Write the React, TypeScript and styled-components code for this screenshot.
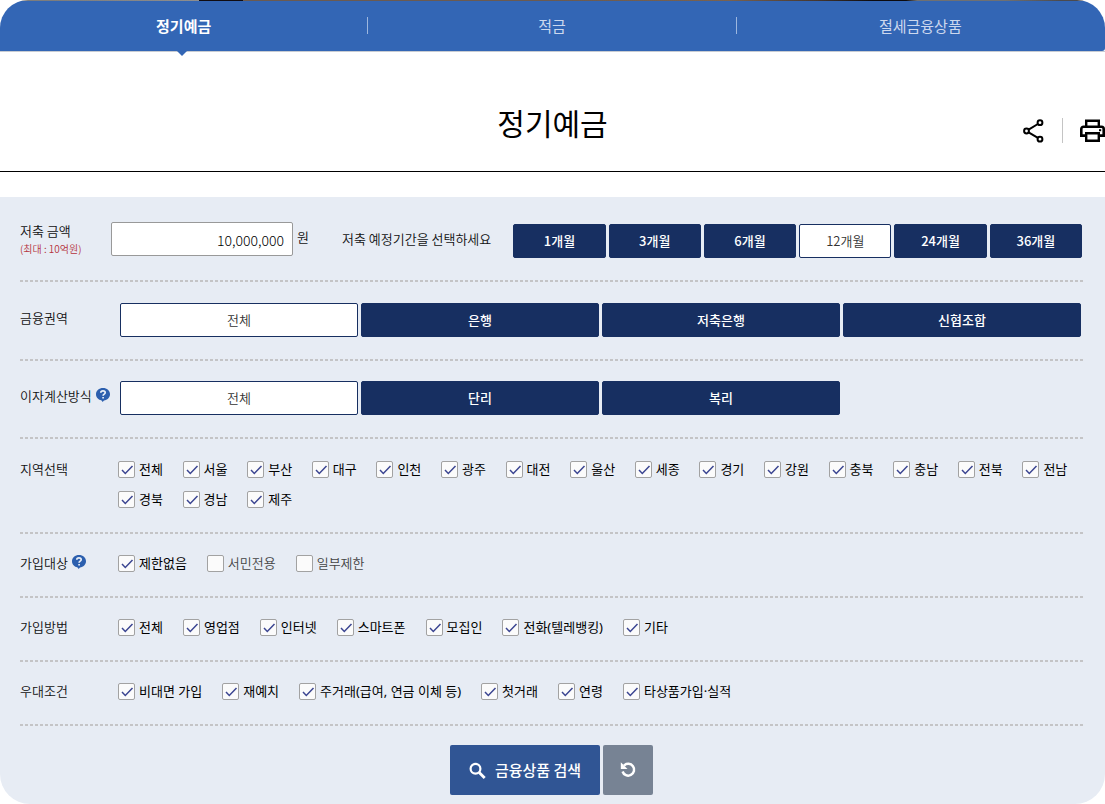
import React, { useState } from "react";
import styled, { createGlobalStyle, css } from "styled-components";

const GlobalStyle = createGlobalStyle`
  * { box-sizing: border-box; }
  body {
    margin: 0;
    background: #fff;
    color: #111;
    font-family: "Noto Sans CJK KR", "Noto Sans", sans-serif;
    font-size: 13px;
    line-height: 18px;
  }
  button, input { font-family: inherit; }
`;

const TabBar = styled.nav`
  display: flex;
  height: 51px;
  border-radius: 28px 28px 3px 0;
  background:
    linear-gradient(90deg, #7d7d7d 0 5%, #8e8e8e 18%, #100c12 18% 22%, #6b5a50 22% 50%, #7a624f 66%, #44362f 74%, #0c0a0e 79% 82%, #6f7072 83% 91%, #4b4a4e 96%)
      0 0 / 100% 1px no-repeat,
    #3366b5;
`;

const Tab = styled.a<{ $active?: boolean }>`
  position: relative;
  flex: 1;
  display: flex;
  align-items: center;
  justify-content: center;
  padding: 1px 1px 0 0;
  font-size: 15px;
  font-weight: ${(p) => (p.$active ? 700 : 400)};
  color: ${(p) => (p.$active ? "#fff" : "#ccd8ee")};
  text-decoration: none;

  &:not(:first-child)::before {
    content: "";
    position: absolute;
    left: -1px;
    top: 17px;
    width: 1px;
    height: 17px;
    background: #9db7df;
  }

  ${(p) =>
    p.$active &&
    css`
      &::after {
        content: "";
        position: absolute;
        left: calc(50% - 8px);
        top: 50px;
        border: 6px solid transparent;
        border-top-color: #3366b5;
        border-bottom: 0;
      }
    `}
`;

const TitleBar = styled.header`
  display: grid;
  grid-template-columns: 1fr auto 1fr;
  align-items: center;
  padding: 43px 0 21px;
  border-top: 1px solid #c8ccd2;
  border-bottom: 1px solid #000;
`;

const Title = styled.h1`
  grid-column: 2;
  margin: 0;
  font-size: 30px;
  font-weight: 400;
  line-height: 55px;
  color: #000;
`;

const Tools = styled.div`
  display: flex;
  align-items: center;
  justify-content: flex-end;
  padding-top: 16px;
`;

const ToolButton = styled.button`
  display: flex;
  padding: 0;
  border: 0;
  background: none;
  cursor: pointer;
`;

const ToolDivider = styled.span`
  width: 1px;
  height: 25px;
  margin: 0 17px 0 18px;
  background: #c4c4c4;
`;

const Panel = styled.form`
  margin-top: 25px;
  padding: 0 22px 9px 20px;
  border-radius: 0 0 30px 30px;
  background: #e7ecf4;
`;

const Row = styled.div<{ $top: number; $bottom: number }>`
  display: flex;
  align-items: flex-start;
  padding: ${(p) => p.$top}px 0 ${(p) => p.$bottom + 2}px;
  background: repeating-linear-gradient(90deg, #c4c4c6 0 3px, transparent 3px 5px)
    0 100% / 100% 2px no-repeat;
`;

const RowLabel = styled.div<{ $width: number; $top?: number; $line?: number }>`
  flex: none;
  display: flex;
  flex-wrap: wrap;
  gap: 0 4px;
  width: ${(p) => p.$width}px;
  padding-top: ${(p) => p.$top ?? 0}px;
  font-weight: 350;
  line-height: ${(p) => p.$line ?? 16}px;
`;

const Limit = styled.small`
  font-size: 10px;
  color: #b5333c;
`;

const HelpButton = styled.button`
  display: flex;
  height: 14px;
  padding: 0;
  border: 0;
  background: none;
  cursor: pointer;
`;

const AmountInput = styled.input`
  width: 182px;
  height: 34px;
  padding: 2px 8px 0;
  border: 1px solid #999;
  border-radius: 2px;
  background: #fff;
  font-size: 14px;
  font-weight: 300;
  text-align: right;
  color: #000;
`;

const Unit = styled.span`
  padding: 6px 0 0 4px;
  font-weight: 350;
`;

const PeriodHint = styled.span`
  padding: 8px 22px 0 33px;
  font-weight: 350;
  white-space: nowrap;
`;

const Choices = styled.div<{ $columns: number; $top: number; $end: number }>`
  flex: 1;
  display: grid;
  grid-template-columns: repeat(${(p) => p.$columns}, 1fr);
  gap: 3px;
  padding: ${(p) => p.$top}px ${(p) => p.$end}px 0 0;
`;

const Choice = styled.button<{ $selected: boolean }>`
  height: 34px;
  padding: 0 0 2px;
  border: 1px solid #172f61;
  border-radius: 2px;
  background: ${(p) => (p.$selected ? "#fff" : "#172f61")};
  color: ${(p) => (p.$selected ? "#333" : "#fff")};
  font-size: 13px;
  font-weight: ${(p) => (p.$selected ? 350 : 500)};
  cursor: pointer;
`;

const Checks = styled.div<{ $columns?: number }>`
  font-family: "Noto Sans", "Noto Sans CJK KR", sans-serif;
  ${(p) =>
    p.$columns
      ? css`
          flex: 1;
          display: grid;
          grid-template-columns: repeat(${p.$columns}, 1fr);
          gap: 13px 0;
          margin-right: -4px;
        `
      : css`
          display: flex;
          flex-wrap: wrap;
          gap: 13px 20px;
        `}
`;

const CheckLabel = styled.label`
  position: relative;
  display: flex;
  align-items: center;
  gap: 4px;
  height: 17px;
  white-space: nowrap;
  cursor: pointer;
`;

const CheckText = styled.span`
  padding-bottom: 2px;
`;

const CheckInput = styled.input`
  appearance: none;
  flex: none;
  width: 17px;
  height: 17px;
  margin: 0;
  border: 1px solid #a2a2a2;
  border-radius: 2px;
  background: #fbfbfb;

  & ~ svg { visibility: hidden; }
  &:checked ~ svg { visibility: visible; }
  & ~ span { font-weight: 350; color: #444; }
  &:checked ~ span { font-weight: 400; color: #000; }
`;

const CheckMark = styled.svg`
  position: absolute;
  left: 0;
  top: 0;
  pointer-events: none;
`;

const Actions = styled.div`
  display: flex;
  justify-content: center;
  gap: 3px;
  padding-top: 19px;
`;

const ActionButton = styled.button<{ $wide?: boolean }>`
  display: flex;
  align-items: center;
  justify-content: center;
  gap: 9px;
  width: ${(p) => (p.$wide ? 150 : 50)}px;
  height: 50px;
  padding: 0;
  border: 0;
  border-radius: 2px;
  background: ${(p) => (p.$wide ? "#305594" : "#778394")};
  color: #fff;
  font-size: 15px;
  font-weight: 500;
  cursor: pointer;
`;

const ActionText = styled.span`
  padding-bottom: 2px;
`;

const ShareIcon = () => (
  <svg width="21" height="24" viewBox="0 0 21 24" fill="none" stroke="#000" strokeWidth="2" aria-hidden="true">
    <circle cx="3.5" cy="12" r="2.4" />
    <circle cx="17" cy="3.7" r="2.4" />
    <circle cx="17" cy="20.2" r="2.4" />
    <path d="M5.6 10.7 14.9 5M5.6 13.3l9.3 5.6" />
  </svg>
);

const PrinterIcon = () => (
  <svg width="25" height="24" viewBox="0 0 25 24" fill="none" stroke="#000" aria-hidden="true">
    <path d="M6.2 7V1.7h12.600V7" strokeWidth="2.4" />
    <path d="M6 16.600H1.300V10A2.200 2.200 0 0 1 3.500 7.800h18A2.200 2.200 0 0 1 23.700 10v6.600H19" strokeWidth="2.6" />
    <path d="M6.2 14.200h12.600v7.600H6.200z" strokeWidth="2.4" />
    <path d="M19 11.200h2.200" strokeWidth="2" />
  </svg>
);

const HelpIcon = () => (
  <svg width="14" height="14" viewBox="0 0 14 14" aria-hidden="true">
    <path d="M7 0c3.9 0 7 2.7 7 6.3 0 3.3-2.7 5.9-6 6.3L6.6 14l-1-1.6C2.4 11.9 0 9.5 0 6.3 0 2.7 3.1 0 7 0z" fill="#2c5fae" />
    <path d="M4.8 4.8c0-1.2.9-1.9 2.2-1.9s2.2.7 2.2 1.8c0 1.3-2.1 1.5-2.1 3M7.1 8.900v1.7" fill="none" stroke="#e6edf7" strokeWidth="1.7" />
  </svg>
);

const SearchIcon = () => (
  <svg width="17" height="17" viewBox="0 0 17 17" fill="none" stroke="#fff" aria-hidden="true">
    <circle cx="6.5" cy="6.8" r="4.9" strokeWidth="2.2" />
    <path d="m10.2 10.500 5.5 5.5" strokeWidth="2.8" />
  </svg>
);

const ResetIcon = () => (
  <svg width="16" height="16" viewBox="0 0 16 16" fill="none" aria-hidden="true">
    <path d="M4 3.6A5.9 5.9 0 1 1 2.6 9.5" stroke="#fff" strokeWidth="2.5" />
    <path d="M.8.3v6.7h6.7z" fill="#fff" />
  </svg>
);

function Check({ label, checked = true }: { label: string; checked?: boolean }) {
  return (
    <CheckLabel>
      <CheckInput type="checkbox" defaultChecked={checked} />
      <CheckMark width="17" height="17" viewBox="0 0 17 17" fill="none" stroke="#3b4591" strokeWidth="1.5" aria-hidden="true">
        <path d="m4 9 3.3 3.500 7.2-7.500" />
      </CheckMark>
      <CheckText>{label}</CheckText>
    </CheckLabel>
  );
}

function ChoiceGroup({ options, initial, columns, top = 0, end = 2, label }: {
  options: string[];
  initial: string;
  columns: number;
  top?: number;
  end?: number;
  label: string;
}) {
  const [selected, setSelected] = useState(initial);
  return (
    <Choices $columns={columns} $top={top} $end={end} role="group" aria-label={label}>
      {options.map((o) => (
        <Choice key={o} type="button" $selected={o === selected} aria-pressed={o === selected} onClick={() => setSelected(o)}>
          {o}
        </Choice>
      ))}
    </Choices>
  );
}

const regions = ["전체", "서울", "부산", "대구", "인천", "광주", "대전", "울산", "세종", "경기", "강원", "충북", "충남", "전북", "전남", "경북", "경남", "제주"];
const methods = ["전체", "영업점", "인터넷", "스마트폰", "모집인", "전화(텔레뱅킹)", "기타"];
const benefits = ["비대면 가입", "재예치", "주거래(급여, 연금 이체 등)", "첫거래", "연령", "타상품가입·실적"];

export default function App() {
  return (
    <>
      <GlobalStyle />
      <TabBar>
        <Tab href="#deposit" $active aria-current="page">정기예금</Tab>
        <Tab href="#savings">적금</Tab>
        <Tab href="#tax">절세금융상품</Tab>
      </TabBar>
      <TitleBar>
        <Title>정기예금</Title>
        <Tools>
          <ToolButton type="button" aria-label="공유"><ShareIcon /></ToolButton>
          <ToolDivider />
          <ToolButton type="button" aria-label="인쇄"><PrinterIcon /></ToolButton>
        </Tools>
      </TitleBar>
      <Panel onSubmit={(e) => e.preventDefault()}>
        <Row $top={25} $bottom={22}>
          <RowLabel $width={91} $line={18}>
            <label htmlFor="amount">저축 금액</label>
            <Limit>(최대 : 10억원)</Limit>
          </RowLabel>
          <AmountInput id="amount" type="text" defaultValue="10,000,000" />
          <Unit>원</Unit>
          <PeriodHint>저축 예정기간을 선택하세요</PeriodHint>
          <ChoiceGroup label="저축 예정기간" columns={6} top={2} end={1} initial="12개월" options={["1개월", "3개월", "6개월", "12개월", "24개월", "36개월"]} />
        </Row>
        <Row $top={21} $bottom={22}>
          <RowLabel $width={100} $top={7}>금융권역</RowLabel>
          <ChoiceGroup label="금융권역" columns={4} initial="전체" options={["전체", "은행", "저축은행", "신협조합"]} />
        </Row>
        <Row $top={20} $bottom={22}>
          <RowLabel $width={100} $top={7}>
            이자계산방식
            <HelpButton type="button" aria-label="이자계산방식 도움말"><HelpIcon /></HelpButton>
          </RowLabel>
          <ChoiceGroup label="이자계산방식" columns={4} initial="전체" options={["전체", "단리", "복리"]} />
        </Row>
        <Row $top={22} $bottom={24}>
          <RowLabel $width={98}>지역선택</RowLabel>
          <Checks $columns={15}>{regions.map((r) => <Check key={r} label={r} />)}</Checks>
        </Row>
        <Row $top={21} $bottom={24}>
          <RowLabel $width={98}>
            가입대상
            <HelpButton type="button" aria-label="가입대상 도움말"><HelpIcon /></HelpButton>
          </RowLabel>
          <Checks>
            <Check label="제한없음" />
            <Check label="서민전용" checked={false} />
            <Check label="일부제한" checked={false} />
          </Checks>
        </Row>
        <Row $top={21} $bottom={24}>
          <RowLabel $width={98}>가입방법</RowLabel>
          <Checks>{methods.map((m) => <Check key={m} label={m} />)}</Checks>
        </Row>
        <Row $top={21} $bottom={24}>
          <RowLabel $width={98}>우대조건</RowLabel>
          <Checks>{benefits.map((b) => <Check key={b} label={b} />)}</Checks>
        </Row>
        <Actions>
          <ActionButton type="submit" $wide><SearchIcon /><ActionText>금융상품 검색</ActionText></ActionButton>
          <ActionButton type="reset" aria-label="초기화"><ResetIcon /></ActionButton>
        </Actions>
      </Panel>
    </>
  );
}
